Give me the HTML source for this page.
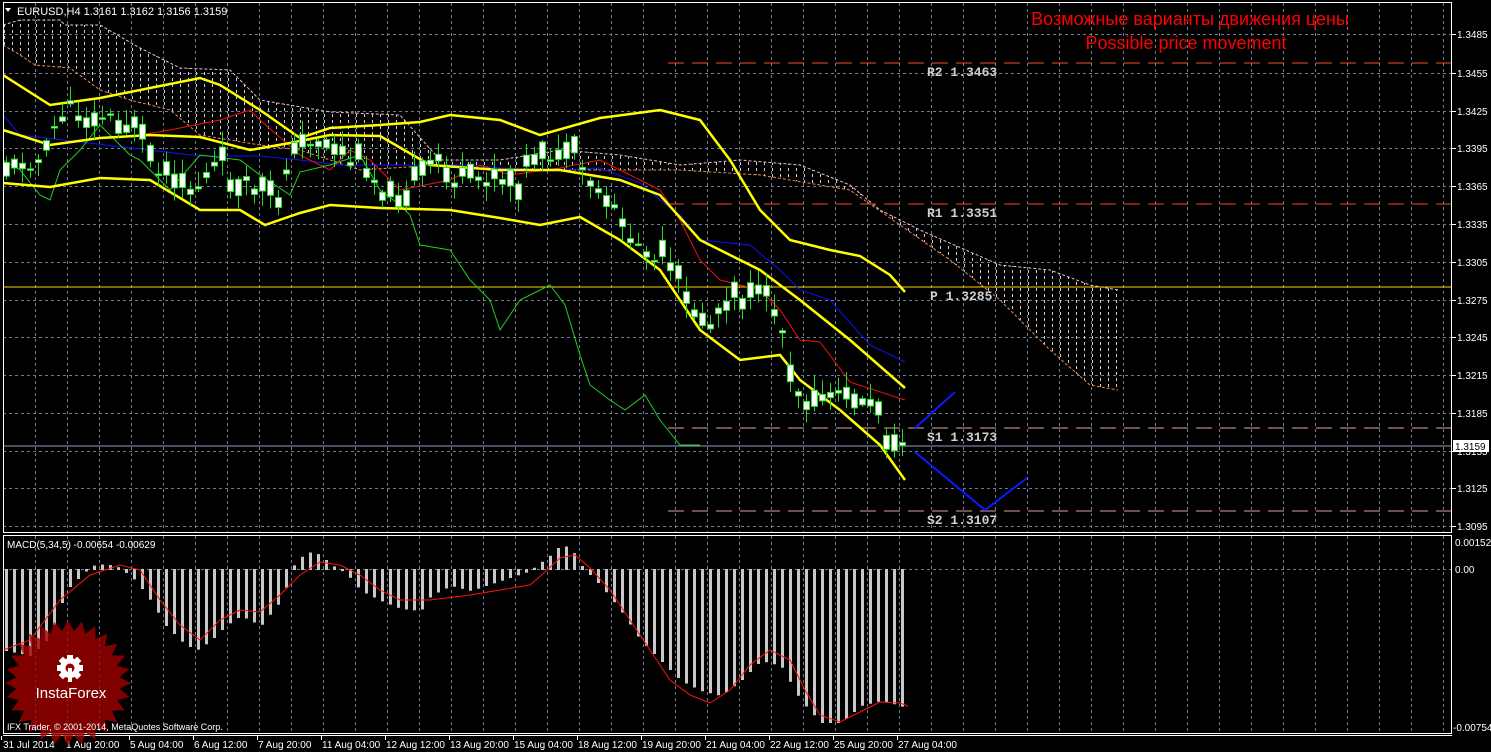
<!DOCTYPE html>
<html><head><meta charset="utf-8"><style>
html,body{margin:0;padding:0;background:#000;width:1491px;height:752px;overflow:hidden}
svg{display:block}
text{font-family:"Liberation Sans","DejaVu Sans",sans-serif}
</style></head><body>
<svg id="s" width="1491" height="752" xmlns="http://www.w3.org/2000/svg">
<rect width="1491" height="752" fill="#000"/>
<defs>
<pattern id="vp" width="8" height="6" patternUnits="userSpaceOnUse"><rect x="4" y="0" width="1" height="3" fill="#d0d0d0"/></pattern>
<clipPath id="mc"><rect x="3" y="2" width="1449" height="531"/></clipPath>
<clipPath id="hc"><rect x="3" y="536" width="1449" height="198"/></clipPath>
</defs>
<g id="grid"></g>
<g id="cloud" clip-path="url(#mc)"></g>
<line x1="668" y1="63" x2="1452" y2="63" stroke="#f0561c" stroke-width="1" stroke-dasharray="16,8"/>
<line x1="668" y1="204" x2="1452" y2="204" stroke="#f0561c" stroke-width="1" stroke-dasharray="16,8"/>
<line x1="3" y1="287" x2="1452" y2="287" stroke="#ffd400" stroke-width="1"/>
<line x1="668" y1="428" x2="1452" y2="428" stroke="#e0a095" stroke-width="1" stroke-dasharray="16,8"/>
<line x1="668" y1="511" x2="1452" y2="511" stroke="#e0a095" stroke-width="1" stroke-dasharray="16,8"/>
<line x1="3" y1="446" x2="1452" y2="446" stroke="#8ea2bd" stroke-width="1"/>
<g id="lines" clip-path="url(#mc)"></g>
<g id="candles"></g>
<g id="macd" clip-path="url(#hc)"></g>
<polyline points="915,428 955,392" fill="none" stroke="#0a1aff" stroke-width="2"/>
<polyline points="915,452 985,510 1027,478" fill="none" stroke="#0a1aff" stroke-width="2"/>
<g font-size="13" fill="#d0d0d0" font-weight="bold">
<text x="927" y="76" style="font-family:'Liberation Mono',monospace">R2 1.3463</text>
<text x="927" y="217" style="font-family:'Liberation Mono',monospace">R1 1.3351</text>
<text x="930" y="300" style="font-family:'Liberation Mono',monospace">P 1.3285</text>
<text x="927" y="441" style="font-family:'Liberation Mono',monospace">S1 1.3173</text>
<text x="927" y="524" style="font-family:'Liberation Mono',monospace">S2 1.3107</text>
</g>
<text x="1190" y="25" font-size="18" fill="#f00" text-anchor="middle">Возможные варианты движения цены</text>
<text x="1186" y="49" font-size="18" fill="#f00" text-anchor="middle">Possible price movement</text>
<rect x="3.5" y="2.5" width="1448" height="530" fill="none" stroke="#fff"/>
<rect x="3.5" y="535.5" width="1448" height="198" fill="none" stroke="#fff"/>
<line x1="3" y1="735.5" x2="1452" y2="735.5" stroke="#fff"/>
<g id="axis" font-size="11" fill="#fff"></g>
<text x="17" y="15" font-size="11" fill="#fff">EURUSD,H4  1.3161 1.3162 1.3156 1.3159</text>
<polygon points="5,8 11,8 8,12" fill="#fff"/>
<text x="7" y="548" font-size="10" fill="#fff">MACD(5,34,5) -0.00654 -0.00629</text>
<polygon id="star" fill="#a00000" fill-opacity="0.8"/>
<g id="gear" fill="#fff">
<circle cx="70" cy="668" r="10"/>
<circle cx="70" cy="668" r="4.5" fill="#a00000"/>
<rect x="68" y="668" width="4" height="14"/>
</g>
<text x="71" y="698" font-size="15" fill="#fff" text-anchor="middle">InstaForex</text>
<text x="7" y="730" font-size="9" fill="#fff">IFX Trader, © 2001-2014, MetaQuotes Software Corp.</text>
<rect x="1453" y="440" width="36" height="12" fill="#fff"/>
<text x="1455" y="450" font-size="10" fill="#000">1.3159</text>
</svg>
<script>
(function(){
var NS="http://www.w3.org/2000/svg";
function el(p,t,a){var e=document.createElementNS(NS,t);for(var k in a)e.setAttribute(k,a[k]);document.getElementById(p).appendChild(e);return e;}
function interp(pts,x){for(var i=0;i<pts.length-1;i++){if(x<=pts[i+1][0]){var a=pts[i],b=pts[i+1];return a[1]+(b[1]-a[1])*(x-a[0])/(b[0]-a[0]);}}return pts[pts.length-1][1];}
function pl(p,pts,c,w,extra){var s=pts.map(function(q){return q[0]+","+q[1]}).join(" ");var a={points:s,fill:"none",stroke:c,"stroke-width":w};if(extra)for(var k in extra)a[k]=extra[k];return el(p,"polyline",a);}
var ys=[34,73,111,148,186,224,262,300,337,375,413,451,488,526];
var vals=["1.3485","1.3455","1.3425","1.3395","1.3365","1.3335","1.3305","1.3275","1.3245","1.3215","1.3185","1.3155","1.3125","1.3095"];
ys.forEach(function(y,i){el("grid","line",{x1:3,y1:y+.5,x2:1452,y2:y+.5,stroke:"#6f7d8f","stroke-dasharray":"3,3"});
var t=el("axis","text",{x:1457,y:y+4,"font-size":10});t.textContent=vals[i];el("axis","line",{x1:1452,y1:y+.5,x2:1456,y2:y+.5,stroke:"#fff"});});
el("grid","line",{x1:3,y1:569.5,x2:1452,y2:569.5,stroke:"#6f7d8f","stroke-dasharray":"3,3"});
for(var x=35;x<1452;x+=32){el("grid","line",{x1:x+.5,y1:3,x2:x+.5,y2:533,stroke:"#6f7d8f","stroke-dasharray":"3,3"});el("grid","line",{x1:x+.5,y1:536,x2:x+.5,y2:733,stroke:"#6f7d8f","stroke-dasharray":"3,3"});}
var t1=el("axis","text",{x:1455,y:546,"font-size":10});t1.textContent="0.00152";
var t2=el("axis","text",{x:1455,y:573,"font-size":10});t2.textContent="0.00";
var t3=el("axis","text",{x:1453,y:731,"font-size":10});t3.textContent="-0.00754";
var tl=["31 Jul 2014","1 Aug 20:00","5 Aug 04:00","6 Aug 12:00","7 Aug 20:00","11 Aug 04:00","12 Aug 12:00","13 Aug 20:00","15 Aug 04:00","18 Aug 12:00","19 Aug 20:00","21 Aug 04:00","22 Aug 12:00","25 Aug 20:00","27 Aug 04:00"];
tl.forEach(function(s,i){var x=i==0?3:66+(i-1)*64;var t=el("axis","text",{x:x,y:748,"font-size":10});t.textContent=s;var tx=(i==0?3:67+(i-1)*64)-2;el("axis","line",{x1:tx+.5,y1:736,x2:tx+.5,y2:740,stroke:"#fff"});});
var ctop=[[3,25],[20,20],[60,20],[65,25],[100,25],[140,48],[180,68],[230,70],[260,100],[330,112],[400,115],[440,160],[500,160],[560,150],[620,155],[680,165],[740,160],[800,165],[850,185],[880,210],[920,230],[1000,265],[1050,270],[1090,285],[1118,290]];
var cbot=[[3,45],[20,55],[35,65],[70,68],[100,90],[130,100],[170,110],[200,135],[230,140],[260,145],[300,150],[360,170],[440,165],[500,170],[560,170],[620,170],[680,170],[760,175],[850,190],[900,225],[950,260],[1000,300],[1050,350],[1090,385],[1118,390]];
var poly=ctop.concat(cbot.slice().reverse()).map(function(q){return q.join(",")}).join(" ");
el("cloud","polygon",{points:poly,fill:"url(#vp)"});
pl("cloud",ctop,"#f0c0c8",1,{"stroke-dasharray":"3,2"});
pl("cloud",cbot,"#e88a50",1,{"stroke-dasharray":"3,2"});
var up=[[3,75],[50,105],[100,98],[150,88],[200,78],[220,85],[260,110],[300,138],[330,128],[380,125],[420,122],[450,115],[500,120],[540,135],[600,118],[660,110],[680,115],[700,120],[730,160],[760,210],[790,240],[830,250],[860,256],[890,275],[905,292]];
var mid=[[3,130],[50,145],[100,138],[150,135],[200,137],[250,150],[290,143],[330,135],[380,136],[430,165],[500,170],[560,170],[620,180],[660,195],[700,240],[760,270],[800,300],[850,340],[905,388]];
var lo=[[3,183],[50,187],[100,178],[150,180],[200,210],[240,210],[265,225],[300,213],[330,205],[380,208],[450,210],[500,218],[540,225],[580,217],[620,240],[660,270],[700,330],[740,360],[780,355],[800,380],[840,410],[880,445],[905,480]];
var red=[[140,135],[170,130],[220,120],[250,110],[260,120],[300,155],[330,170],[350,150],[370,160],[400,190],[450,180],[480,165],[510,175],[560,168],[600,160],[620,170],[640,180],[660,190],[680,220],[700,260],[720,280],[760,290],[780,310],[800,340],[820,342],[850,382],[905,400]];
var blue=[[3,115],[20,135],[200,156],[260,156],[300,160],[340,165],[400,165],[470,165],[500,168],[560,170],[600,168],[640,183],[660,200],[680,215],[700,240],[750,245],[780,270],[800,290],[830,300],[870,345],[905,362]];
var grn=[[3,160],[20,170],[40,195],[50,200],[60,170],[80,150],[100,125],[130,155],[140,160],[170,190],[200,155],[240,160],[260,175],[290,195],[300,172],[330,165],[360,155],[380,190],[400,205],[410,215],[420,245],[450,250],[470,280],[490,300],[500,330],[520,300],[550,285],[565,305],[580,355],[590,385],[610,400],[625,410],[645,395],[660,420],[680,445],[700,445]];
pl("lines",blue,"#1010ff",1);pl("lines",red,"#f01010",1);pl("lines",grn,"#20d020",1);
pl("lines",up,"#ffff00",2.5);pl("lines",mid,"#ffff00",2.5);pl("lines",lo,"#ffff00",2.5);
var pr=[[5,160],[20,165],[40,160],[55,125],[70,110],[90,115],[110,118],[135,125],[150,160],[165,175],[180,185],[195,190],[205,175],[220,165],[235,180],[250,190],[265,195],[275,205],[290,155],[300,135],[320,145],[340,155],[360,165],[380,185],[400,190],[420,180],[440,160],[455,180],[470,185],[490,175],[510,185],[525,170],[540,155],[560,155],[575,160],[590,185],[605,200],[620,215],[630,245],[645,250],[660,260],[675,280],[690,300],[705,330],[720,310],[735,295],[750,293],[765,290],[780,325],[790,360],[800,395],[815,400],[830,398],[845,395],[860,400],[875,405],[885,430],[895,440],[908,443]];
var seed=11;function rnd(){seed=(seed*9301+49297)%233280;return seed/233280;}
for(var x=6;x<=908;x+=8){var c=interp(pr,x)+(rnd()-0.5)*14,o=c+(rnd()-0.5)*34;if(x>=900){o=c+3;}
var h=Math.min(o,c)-2-rnd()*14,l=Math.max(o,c)+2+rnd()*14;
el("candles","line",{x1:x+.5,y1:h,x2:x+.5,y2:l,stroke:"#22dd22"});
var t=Math.min(o,c),b=Math.max(Math.abs(o-c),1.5);
el("candles","rect",{x:x-2.5,y:t,width:6,height:b,fill:"#fff",stroke:"#22dd22","stroke-width":1});}
var hv=[[5,650],[30,655],[45,640],[55,620],[65,590],[80,575],[90,566],[105,564],[120,568],[135,580],[150,600],[165,625],[180,640],[195,650],[210,640],[225,625],[240,615],[260,625],[280,600],[295,560],[310,552],[320,555],[330,565],[345,572],[360,590],[380,600],[400,608],[420,610],[430,595],[450,585],[470,590],[500,580],[530,570],[550,555],[560,545],[570,548],[580,565],[600,585],[620,610],[640,640],[660,660],[680,680],[700,690],[720,695],[740,680],[760,660],[780,665],[800,700],[820,722],[840,722],[860,705],[880,700],[900,705],[908,710]];
for(var x=5;x<=908;x+=8){var y=interp(hv,x);el("macd","rect",{x:x,y:Math.min(y,569),width:3,height:Math.abs(y-569)+1,fill:"#c8c8c8"});}
var sig=[[3,650],[30,640],[60,600],[90,575],[120,565],[140,570],[160,600],[180,625],[200,640],[220,620],[240,610],[260,612],[280,595],[300,575],[320,562],[340,565],[360,575],[380,590],[400,600],[430,600],[470,595],[500,590],[530,585],[545,572],[560,558],[575,555],[590,568],[610,590],[630,620],[650,650],[670,680],[690,695],[710,703],[730,690],[750,665],[770,650],[790,660],[805,690],[820,715],[840,722],[860,712],[880,702],[900,703],[908,706]];
pl("macd",sig,"#ff1010",1);
var pts=[];for(var i=0;i<56;i++){var a=i*Math.PI/28,r=i%2?52:63;pts.push((68+r*Math.sin(a)).toFixed(1)+","+(683-r*Math.cos(a)).toFixed(1));}
document.getElementById("star").setAttribute("points",pts.join(" "));
for(var i=0;i<8;i++){if(i==4)continue;el("gear","rect",{x:67,y:655,width:6,height:5,fill:"#fff",transform:"rotate("+(i*45)+" 70 668)"});}
})();
</script>
</body></html>
